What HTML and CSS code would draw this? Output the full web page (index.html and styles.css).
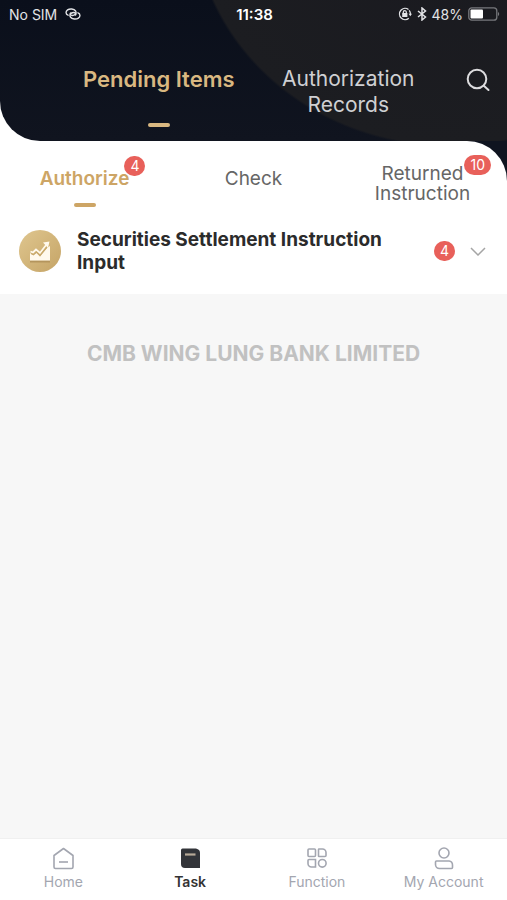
FILE: index.html
```
<!DOCTYPE html>
<html lang="en">
<head>
    <meta charset="UTF-8">
    <meta name="viewport" content="width=device-width, initial-scale=1.0">
    <title>Pending Items</title>
    <link rel="stylesheet" href="styles.css">
</head>
<body>
    <header class="header">
        <div class="status-bar">
            <div class="status-left">
                <span>No SIM</span>
                <svg width="16" height="12" viewBox="0 0 16 12" fill="none" stroke="currentColor" stroke-width="1.4" stroke-linecap="round">
                    <path d="M3 7.2C.6 6.4.4 3.4 2.6 1.9 4.8.4 9 .6 10.6 3c1.2 2-.4 4.3-3 4.5C5.5 7.6 4.6 6 5.6 4.9"/>
                    <path d="M13 4.8c2.4.8 2.6 3.8.4 5.3-2.2 1.5-6.4 1.3-8-1.100-1.200-2 .4-4.300 3-4.500 2.100-.1 3 1.500 2 2.600"/>
                </svg>
            </div>
            <span class="status-time">11:38</span>
            <div class="status-right">
                <svg width="14" height="14" viewBox="0 0 14 14" fill="none" stroke="currentColor" stroke-width="1.3">
                    <path d="M10.500 2.500A5.600 5.600 0 1 0 10.800 11.200"/>
                    <path d="M11.200 3.300A5.600 5.600 0 0 1 12.400 7.200"/>
                    <path d="M10.600 6.800h3.400l-1.700 2.400z" fill="currentColor" stroke="none"/>
                    <rect x="4.200" y="6" width="5.200" height="4" fill="currentColor" stroke="none"/>
                    <path d="M5.300 6.200V5.200a1.500 1.500 0 0 1 3 0v1"/>
                </svg>
                <svg width="10" height="14" viewBox="0 0 10 14" fill="none" stroke="currentColor" stroke-width="1.500">
                    <path d="M1 4l7.500 6L5 13V1l3.500 3L1 10"/>
                </svg>
                <span>48%</span>
                <svg width="32" height="14" viewBox="0 0 32 14">
                    <rect x=".8" y=".8" width="28" height="12.400" rx="3" fill="none" stroke="#77787c" stroke-width="1.300"/>
                    <rect x="2.500" y="2.500" width="12.500" height="9" rx="1" fill="#fff"/>
                    <path d="M30 5v4c1.600-.6 1.600-3.400 0-4z" fill="#77787c"/>
                </svg>
            </div>
        </div>
        <div class="main-tabs">
            <button class="main-tab active" type="button">Pending Items</button>
            <button class="main-tab" type="button">Authorization Records</button>
            <button class="search-btn" type="button" aria-label="Search">
                <svg width="24" height="24" viewBox="0 0 24 24" fill="none" stroke="currentColor" stroke-width="2" stroke-linecap="round">
                    <circle cx="11" cy="11" r="9.300"/>
                    <path d="M17.800 17.800L22.500 22"/>
                </svg>
            </button>
        </div>
    </header>

    <div class="tabs-wrap">
        <div class="sub-tabs">
            <button class="sub-tab active" type="button"><span class="tab-text">Authorize<span class="badge">4</span></span></button>
            <button class="sub-tab" type="button"><span class="tab-text">Check</span></button>
            <button class="sub-tab two-lines" type="button"><span class="tab-text">Returned<span class="badge">10</span></span> Instruction</button>
        </div>
    </div>

    <main class="content">
        <button class="task-row" type="button">
            <svg class="task-icon" width="42" height="42" viewBox="0 0 42 42">
                <defs>
                    <linearGradient id="gold" x1="0" y1="0" x2="1" y2="1">
                        <stop offset="0" stop-color="#dfc68f"/>
                        <stop offset="1" stop-color="#c5a466"/>
                    </linearGradient>
                </defs>
                <circle cx="21" cy="21" r="21" fill="url(#gold)"/>
                <path d="M11 31.500h20" stroke="#b4955d" stroke-width="2"/>
                <path d="M11 23l3 2 3.500-2 3.500 3.500 7-8.500 3-2V30.500H11z" fill="#fff9ed"/>
                <path d="M11.500 21.500l2.500 1 3-3 4 3.500 6.500-8.500" fill="none" stroke="#fff9ed" stroke-width="1.800"/>
                <path d="M12 23.500l2.500 1.200 3-2.700 3.500 3.500 7-8.500" fill="none" stroke="#c9a96c" stroke-width="1.200"/>
                <path d="M24 12.500l6.500-1-1.500 6.500z" fill="#fff9ed"/>
            </svg>
            <span class="task-title">Securities Settlement Instruction Input</span>
            <span class="count">4</span>
            <svg class="chevron" width="16" height="10" viewBox="0 0 16 10" fill="none" stroke="#a5a5a5" stroke-width="1.500">
                <path d="M1 2l7 7 7-7"/>
            </svg>
        </button>
        <p class="bank-name">CMB WING LUNG BANK LIMITED</p>
    </main>

    <nav class="bottom-nav">
        <a class="nav-item" href="#home">
            <svg width="24" height="24" viewBox="0 0 24 24" fill="none" stroke="currentColor" stroke-width="1.600" stroke-linejoin="round">
                <path d="M3 8.500L12.500 1.500l9.500 7v11.500a1.500 1.500 0 0 1-1.500 1.500h-16A1.500 1.500 0 0 1 3 20z"/>
                <path d="M8 15h9"/>
            </svg>
            <span>Home</span>
        </a>
        <a class="nav-item active" href="#task">
            <svg width="24" height="24" viewBox="0 0 24 24">
                <path d="M4.500 1.500H18q4 1 4 4V21H7q-4 0-4-4V3q0-1.500 1.500-1.500z" fill="#323439"/>
                <path d="M7 7.500h10.500" stroke="#b7a998" stroke-width="2.200"/>
            </svg>
            <span>Task</span>
        </a>
        <a class="nav-item" href="#function">
            <svg width="24" height="24" viewBox="0 0 24 24" fill="none" stroke="currentColor" stroke-width="1.600">
                <rect x="3" y="2" width="7.500" height="7.500" rx="1"/>
                <path d="M14 2h3.500a3.500 3.500 0 0 1 3.500 3.500v3a1 1 0 0 1-1 1h-6a.5.5 0 0 1-.5-.5V2.500A.5.5 0 0 1 14 2z"/>
                <path d="M6.500 12.500h4v7.500h-4A3.500 3.500 0 0 1 3 16.500v-3a1 1 0 0 1 1-1z"/>
                <circle cx="17.300" cy="16.300" r="3.800"/>
            </svg>
            <span>Function</span>
        </a>
        <a class="nav-item" href="#account">
            <svg width="24" height="24" viewBox="0 0 24 24" fill="none" stroke="currentColor" stroke-width="1.600">
                <circle cx="12" cy="6" r="5"/>
                <path d="M4.500 14h12.500a4 4 0 0 1 3.500 4v2.500a1 1 0 0 1-1 1H7.500a4 4 0 0 1-4-4V15a1 1 0 0 1 1-1z"/>
            </svg>
            <span>My Account</span>
        </a>
    </nav>
</body>
</html>
```
FILE: styles.css
```
:root {
    --navy: #0f1420;
    --gold: #d9b881;
    --gold-dark: #cda565;
    --red: #e8605a;
    --background: #f7f7f7;
}

* {
    margin: 0;
    padding: 0;
    box-sizing: border-box;
}

body {
    display: flex;
    flex-direction: column;
    min-height: 100vh;
    font-family: Inter, 'Liberation Sans', sans-serif;
    background: white;
}

button {
    font-family: inherit;
    background: none;
    border: none;
    cursor: pointer;
}

svg {
    display: block;
    flex: none;
}

.header {
    min-height: 141px;
    color: #cfd0d3;
    border-bottom-left-radius: 40px;
    background:
        radial-gradient(258px 237px at calc(100% - 57px) -90px, #19191f 0, #1c1d21 99%, transparent 100%),
        linear-gradient(#0a0f1b, #10141f);
}

.status-bar {
    display: grid;
    grid-template-columns: 1fr auto 1fr;
    align-items: center;
    height: 28px;
    padding: 0 7px 0 9px;
    font-size: 14px;
    color: #e2e3e6;
}

.status-left,
.status-right {
    display: flex;
    align-items: center;
    gap: 8px;
}

.status-right {
    justify-content: flex-end;
    gap: 5px;
}

.status-time {
    font-weight: 600;
    font-size: 15px;
    color: white;
}

.main-tabs {
    position: relative;
    display: grid;
    grid-template-columns: 1fr 1fr;
    padding: 38px 64px 0;
}

.main-tab {
    position: relative;
    display: flex;
    justify-content: center;
    height: 75px;
    font-size: 21px;
    line-height: 26px;
    color: #cfd0d3;
}

.main-tab.active {
    font-size: 22px;
    font-weight: 600;
    color: var(--gold);
}

.main-tab.active::after,
.sub-tab.active::after {
    content: "";
    position: absolute;
    left: 50%;
    bottom: 14px;
    width: 22px;
    height: 4px;
    margin-left: -11px;
    border-radius: 2px;
    background: var(--gold);
}

.search-btn {
    position: absolute;
    top: 40px;
    right: 17px;
    color: #dcdcde;
}

.tabs-wrap {
    background: linear-gradient(90deg, white 50%, var(--navy) 50%);
}

.sub-tabs {
    display: grid;
    grid-template-columns: repeat(3, 1fr);
    background: white;
    border-top-right-radius: 40px;
}

.sub-tab {
    position: relative;
    height: 67px;
    padding: 9px 32px 0;
    font-size: 19px;
    line-height: 20px;
    color: #666;
}

.sub-tab.active {
    font-weight: 600;
    color: var(--gold-dark);
}

.sub-tab.active::after {
    bottom: 1px;
    background: var(--gold-dark);
}

.sub-tab.two-lines {
    padding-top: 19px;
}

.tab-text {
    position: relative;
}

.badge,
.count {
    min-width: 21px;
    height: 20px;
    padding: 0 6px;
    border-radius: 10px;
    font-size: 14px;
    font-weight: 400;
    line-height: 20px;
    text-align: center;
    color: white;
    background: var(--red);
}

.badge {
    position: absolute;
    left: 100%;
    top: -11px;
    margin-left: -5px;
}

.two-lines .badge {
    top: -7px;
    margin-left: 1px;
}

.content {
    flex: 1;
    background: var(--background);
}

.task-row {
    display: flex;
    align-items: center;
    width: 100%;
    min-height: 86px;
    padding: 0 21px 0 19px;
    text-align: left;
    background: white;
}

.task-title {
    flex: 1;
    margin: 0 32px 0 16px;
    font-size: 19px;
    font-weight: 700;
    line-height: 23px;
    color: #2b2b2b;
}

.chevron {
    margin-left: 15px;
}

.bank-name {
    margin-top: 46px;
    font-size: 21px;
    font-weight: 700;
    line-height: 28px;
    text-align: center;
    color: #c1c1c1;
}

.bottom-nav {
    display: grid;
    grid-template-columns: repeat(4, 1fr);
    height: 62px;
    padding-top: 8px;
    border-top: 1px solid #f0f0f0;
    background: white;
}

.nav-item {
    display: flex;
    flex-direction: column;
    align-items: center;
    gap: 2px;
    font-size: 14px;
    line-height: 18px;
    text-decoration: none;
    color: #a3a6b0;
}

.nav-item.active {
    font-weight: 600;
    color: #333;
}
```
